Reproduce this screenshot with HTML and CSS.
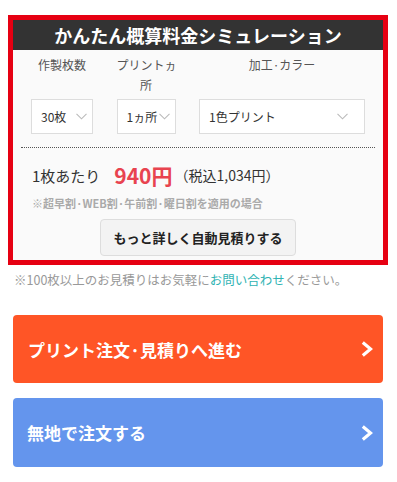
FILE: index.html
```html
<!DOCTYPE html>
<html lang="ja">
<head>
<meta charset="utf-8">
<title>かんたん概算料金シミュレーション</title>
<link rel="stylesheet" href="styles.css">
</head>
<body>
<div class="page">
  <section class="sim">
    <h2 class="sim-title">かんたん概算料金シミュレーション</h2>
    <div class="sim-body">
      <div class="fields">
        <div class="label">作製枚数</div>
        <div class="label">プリントヵ<br>所</div>
        <div class="label">加工·カラー</div>
        <div class="select s1"><span>30枚</span><svg class="chev" width="11" height="7" viewBox="0 0 11 7"><path d="M0.5 0.8 L5.5 5.8 L10.5 0.8" fill="none" stroke="#bbb" stroke-width="1.1"/></svg></div>
        <div class="select s2"><span>1ヵ所</span><svg class="chev" width="11" height="7" viewBox="0 0 11 7"><path d="M0.5 0.8 L5.5 5.8 L10.5 0.8" fill="none" stroke="#bbb" stroke-width="1.1"/></svg></div>
        <div class="select s3"><span>1色プリント</span><svg class="chev" width="11" height="7" viewBox="0 0 11 7"><path d="M0.5 0.8 L5.5 5.8 L10.5 0.8" fill="none" stroke="#bbb" stroke-width="1.1"/></svg></div>
      </div>
      <div class="divider"></div>
      <div class="price">
        <span class="per">1枚あたり</span>
        <span class="amount">940円</span>
        <span class="tax">（税込1,034円）</span>
      </div>
      <p class="note">※超早割·WEB割·午前割·曜日割を適用の場合</p>
      <div class="detail-wrap">
        <button class="detail-btn" type="button">もっと詳しく自動見積りする</button>
      </div>
    </div>
  </section>
  <p class="contact">※100枚以上のお見積りはお気軽に<a class="link" href="#">お問い合わせ</a>ください。</p>
  <a class="cta cta-orange" href="#"><span>プリント注文·見積りへ進む</span><svg width="12" height="16" viewBox="0 0 12 16"><path d="M1.8 1.6 L9.6 8 L1.8 14.4" fill="none" stroke="#fff" stroke-width="3.2"/></svg></a>
  <a class="cta cta-blue" href="#"><span>無地で注文する</span><svg width="12" height="16" viewBox="0 0 12 16"><path d="M1.8 1.6 L9.6 8 L1.8 14.4" fill="none" stroke="#fff" stroke-width="3.2"/></svg></a>
</div>
</body>
</html>
```

FILE: styles.css
```css
* { box-sizing: border-box; }
html, body { margin: 0; padding: 0; background: #fff; }
body {
  font-family: "Noto Sans CJK JP", "Noto Sans", sans-serif;
  color: #333;
}
.page {
  padding: 20px 14px 0 13px;
  display: flex;
  flex-direction: column;
}
.sim {
  outline: 5px solid #e60012;
  background: #fafafa;
}
.sim-title {
  margin: 0;
  height: 30px;
  background: #333;
  color: #fff;
  font-size: 18px;
  font-weight: 700;
  line-height: 30px;
  text-align: center;
}
.sim-body {
  padding: 5px 8px 4px;
}
.fields {
  display: grid;
  grid-template-columns: 62px 59px 166px;
  column-gap: 23.5px;
  row-gap: 4px;
  padding-left: 10px;
}
.label {
  font-size: 12px;
  line-height: 20px;
  color: #555;
  text-align: center;
  align-self: start;
  white-space: nowrap;
}
.select {
  height: 35px;
  background: #fff;
  border: 1px solid #ddd;
  display: flex;
  align-items: center;
  justify-content: space-between;
  font-size: 12px;
  color: #333;
  padding: 0 5px 0 9px;
}
.s3 { padding-right: 16px; }
.chev { flex: none; }
.divider {
  margin-top: 13px;
  border-top: 1px dotted #555;
}
.price {
  margin-top: 12px;
  height: 30px;
  display: flex;
  align-items: center;
  padding-left: 11px;
}
.per { font-size: 15px; color: #333; }
.amount {
  margin-left: 14px;
  font-size: 21px;
  font-weight: 700;
  color: #e8434f;
}
.tax { font-size: 14px; color: #333; margin-left: 2px; }
.note {
  margin: 5px 0 0;
  padding-left: 11px;
  font-size: 11px;
  line-height: 16px;
  color: #aaa;
  font-weight: 700;
}
.detail-wrap {
  margin-top: 8px;
  display: flex;
  justify-content: center;
}
.detail-btn {
  width: 196px;
  height: 37px;
  background: #f3f3f3;
  border: 1px solid #ddd;
  border-radius: 4px;
  font-family: inherit;
  font-size: 13px;
  font-weight: 700;
  color: #222;
  padding: 0;
}
.contact {
  margin: 10px 0 0 1px;
  font-size: 12.5px;
  line-height: 20px;
  color: #999;
}
.link { color: #2fb3b3; text-decoration: none; }
.cta {
  display: flex;
  align-items: center;
  justify-content: space-between;
  height: 68px;
  border-radius: 4px;
  padding: 0 10px 0 15px;
  color: #fff;
  font-size: 17px;
  font-weight: 700;
  text-decoration: none;
}
.cta svg { flex: none; }
.cta-orange { margin-top: 25px; background: #ff5526; }
.cta-blue { margin-top: 15px; height: 69px; background: #6495ed; padding-left: 14px; }
```
